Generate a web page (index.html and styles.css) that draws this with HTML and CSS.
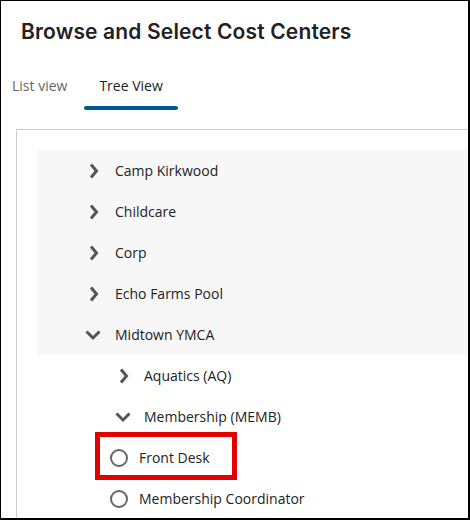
FILE: index.html
```html
<!DOCTYPE html>
<html>
<head>
<meta charset="utf-8">
<link rel="stylesheet" href="styles.css">
</head>
<body>
<div class="frame">
  <h1 class="title">Browse and Select Cost Centers</h1>
  <div class="tabs">
    <div class="tab tab-first">List view</div>
    <div class="tab tab-active">Tree View</div>
  </div>
  <div class="panel">
    <ul class="tree">
      <li class="node lvl1">
        <svg class="ico" viewBox="0 0 20 20"><polyline points="8,3.5 13.5,10 8,16.5"/></svg>
        <span class="label">Camp Kirkwood</span>
      </li>
      <li class="node lvl1">
        <svg class="ico" viewBox="0 0 20 20"><polyline points="8,3.5 13.5,10 8,16.5"/></svg>
        <span class="label">Childcare</span>
      </li>
      <li class="node lvl1">
        <svg class="ico" viewBox="0 0 20 20"><polyline points="8,3.5 13.5,10 8,16.5"/></svg>
        <span class="label">Corp</span>
      </li>
      <li class="node lvl1">
        <svg class="ico" viewBox="0 0 20 20"><polyline points="8,3.5 13.5,10 8,16.5"/></svg>
        <span class="label">Echo Farms Pool</span>
      </li>
      <li class="node lvl1">
        <svg class="ico" viewBox="0 0 20 20"><polyline points="3.5,6.5 10,13 16.5,6.5"/></svg>
        <span class="label">Midtown YMCA</span>
      </li>
      <li class="node lvl2">
        <svg class="ico" viewBox="0 0 20 20"><polyline points="8,3.5 13.5,10 8,16.5"/></svg>
        <span class="label">Aquatics (AQ)</span>
      </li>
      <li class="node lvl2">
        <svg class="ico" viewBox="0 0 20 20"><polyline points="3.5,6.5 10,13 16.5,6.5"/></svg>
        <span class="label">Membership (MEMB)</span>
      </li>
      <li class="node lvl3 marked">
        <svg class="ico radio" viewBox="0 0 20 20"><circle cx="10" cy="10" r="8"/></svg>
        <span class="label">Front Desk</span>
        <span class="highlight"></span>
      </li>
      <li class="node lvl3">
        <svg class="ico radio" viewBox="0 0 20 20"><circle cx="10" cy="10" r="8"/></svg>
        <span class="label">Membership Coordinator</span>
      </li>
    </ul>
  </div>
</div>
</body>
</html>
```

FILE: styles.css
```css
html, body {
  margin: 0;
  padding: 0;
  background: #fff;
}

.frame {
  width: 470px;
  height: 520px;
  box-sizing: border-box;
  border-style: solid;
  border-color: #000;
  border-width: 1px 2px 2px 1px;
  overflow: hidden;
  font-family: "Open Sans", "Noto Sans", sans-serif;
  color: #222;
}

.title {
  margin: 0;
  padding: 18px 0 0 20px;
  font-family: Inter, "Liberation Sans", sans-serif;
  font-weight: 600;
  font-size: 21px;
  line-height: 25px;
  letter-spacing: 0.15px;
  color: #222;
}

.tabs {
  display: flex;
  margin-top: 32px;
  padding-left: 11px;
  margin-bottom: 19px;
}

.tab {
  position: relative;
  padding: 0 15px 14px;
  font-size: 14px;
  line-height: 20px;
  color: #666;
}

.tab-first {
  padding-left: 0;
  padding-right: 17px;
}

.tab-active {
  color: #222;
}

.tab-active::after {
  content: "";
  position: absolute;
  left: 0;
  right: 0;
  bottom: 0;
  height: 4px;
  border-radius: 2px;
  background: #005a8c;
}

.panel {
  margin-left: 15px;
  border-top: 1px solid #cccccc;
  border-left: 1px solid #cccccc;
  padding: 20px 0 0 20px;
}

.tree {
  list-style: none;
  margin: 0;
  padding: 0;
}

.node {
  position: relative;
  display: flex;
  align-items: center;
  height: 41px;
  font-size: 14px;
}

.label {
  position: relative;
  top: -0.5px;
}

.lvl1 {
  background: #f7f7f7;
  padding-left: 46px;
  gap: 12px;
}

.lvl2 {
  padding-left: 76px;
  gap: 11px;
}

.lvl3 {
  padding-left: 72px;
  gap: 10px;
}

.ico {
  width: 20px;
  height: 20px;
  flex: none;
}

.ico polyline {
  fill: none;
  stroke: #555;
  stroke-width: 3;
  stroke-linejoin: miter;
}

.radio circle {
  fill: #fff;
  stroke: #666;
  stroke-width: 2;
}

.highlight {
  position: absolute;
  left: 58px;
  top: -5px;
  width: 142px;
  height: 48px;
  box-sizing: border-box;
  border: 5px solid #e30000;
  pointer-events: none;
}
```
